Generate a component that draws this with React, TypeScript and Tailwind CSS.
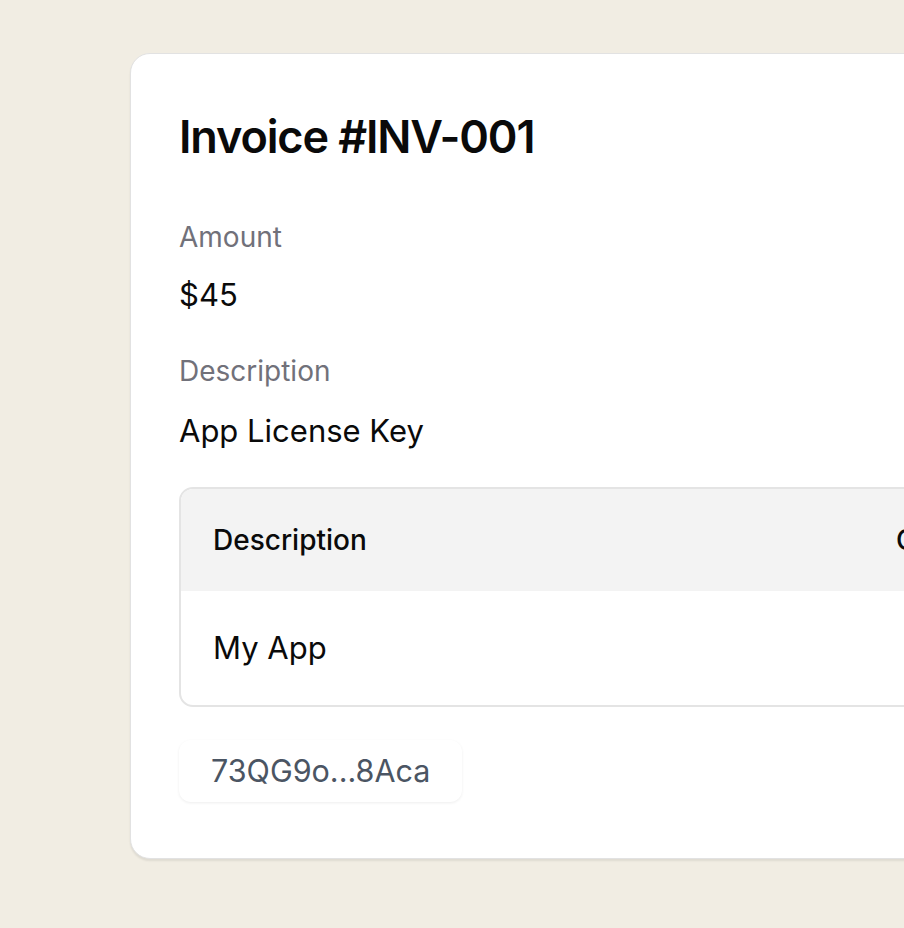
import React from "react";

const InvoiceCard: React.FC = () => {
  return (
    <div className="w-[1000px] shrink-0 rounded-[20px] border border-[#e2e2e2] bg-white px-[48px] pb-[56px] pt-[53px] shadow-[0_2px_2px_rgba(0,0,0,0.08)]">
      <h1 className="text-[45px] font-semibold leading-[60px] tracking-tight text-[#0a0a0a]">
        Invoice #INV-001
      </h1>

      <div className="mt-[52px] text-[28px] leading-[36px] text-[#71717a]">Amount</div>
      <div className="mt-[20px] text-[31px] leading-[40px] text-[#0a0a0a]">$45</div>

      <div className="mt-[38px] text-[28px] leading-[36px] text-[#71717a]">Description</div>
      <div className="mt-[22px] text-[31px] leading-[40px] text-[#0a0a0a]">App License Key</div>

      <div className="mt-[36px] overflow-hidden rounded-[14px] border-2 border-[#e4e4e4]">
        <div className="flex h-[102px] items-center bg-[#f3f3f3] text-[28px] font-medium text-[#0a0a0a]">
          <div className="w-[683px] px-[32px]">Description</div>
          <div className="flex-1 px-[32px]">Cost</div>
        </div>
        <div className="flex h-[114px] items-center text-[31px] text-[#0a0a0a]">
          <div className="w-[683px] px-[32px]">My App</div>
          <div className="flex-1 px-[32px] text-right">$45</div>
        </div>
      </div>

      <div className="mt-[33px] inline-flex h-[62px] items-center rounded-[12px] bg-white px-[32px] text-[30.5px] text-[#4b5563] shadow-[0_1px_3px_rgba(0,0,0,0.07)]">
        73QG9o...8Aca
      </div>
    </div>
  );
};

export default function App() {
  return (
    <div
      className="flex min-h-screen w-full overflow-hidden bg-[#f1ede3] pl-[130px] pt-[53px] pb-[70px]"
      style={{ fontFamily: "Inter, 'Noto Sans', sans-serif" }}
    >
      <InvoiceCard />
    </div>
  );
}
